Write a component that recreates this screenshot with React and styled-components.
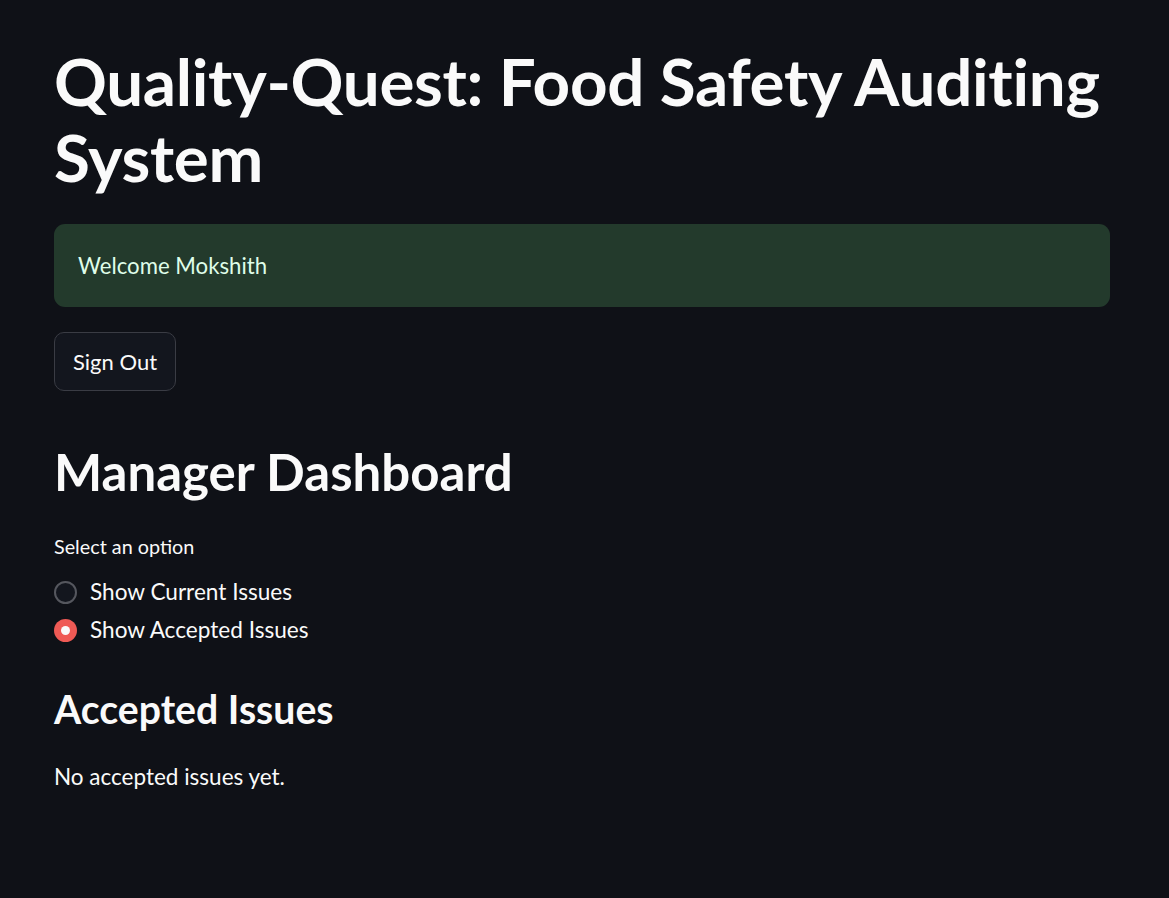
import React from "react";
import styled, { createGlobalStyle } from "styled-components";

const Global = createGlobalStyle`
  html, body { margin: 0; padding: 0; background: #0f1117; }
  body { font-family: "Source Sans Pro", Lato, "Noto Sans", sans-serif; color: #fafafa; }
  #root { min-height: 898px; }
`;

const Page = styled.main`
  background: #0f1117;
  min-height: 898px;
  padding: 43px 59px 40px 54px;
  box-sizing: border-box;
`;

const Title = styled.h1`
  margin: 0 0 29px;
  font-size: 65.5px;
  font-weight: 700;
  line-height: 76px;
  letter-spacing: -0.3px;
  color: #fafafa;
`;

const Alert = styled.div`
  background: #233a2c;
  border-radius: 11px;
  height: 83px;
  padding: 0 24px;
  display: flex;
  align-items: center;
  box-sizing: border-box;
  color: #dffde9;
  font-size: 22.2px;
`;

const Button = styled.button`
  margin-top: 25px;
  height: 59px;
  padding: 0 18px;
  background: #13161e;
  border: 1px solid #3a3c44;
  border-radius: 10px;
  color: #fafafa;
  font-family: inherit;
  font-size: 22px;
  cursor: pointer;
`;

const SubTitle = styled.h2`
  margin: 51px 0 0;
  font-size: 51px;
  font-weight: 700;
  line-height: 60px;
  color: #fafafa;
`;

const Label = styled.div`
  margin-top: 30px;
  font-size: 19.8px;
  line-height: 28px;
  color: #fafafa;
`;

const RadioList = styled.div`
  display: flex;
  flex-direction: column;
  gap: 10px;
  margin-top: 18px;
`;

const RadioRow = styled.label`
  display: flex;
  align-items: center;
  gap: 13px;
  font-size: 22.6px;
  line-height: 28px;
  color: #fafafa;
`;

const Dot = styled.span`
  width: 23px;
  height: 23px;
  border-radius: 50%;
  box-sizing: border-box;
  flex: none;
  display: flex;
  align-items: center;
  justify-content: center;
  background: ${(p) => (p.$checked ? "#ef5a55" : "#13161e")};
  border: ${(p) => (p.$checked ? "none" : "2px solid #55575e")};
  &::after {
    content: "";
    display: ${(p) => (p.$checked ? "block" : "none")};
    width: 9px;
    height: 9px;
    border-radius: 50%;
    background: #fafafa;
  }
`;

const Section = styled.h3`
  margin: 40px 0 0;
  font-size: 39.2px;
  font-weight: 700;
  line-height: 50px;
  color: #fafafa;
`;

const Text = styled.p`
  margin: 28px 0 0;
  font-size: 22.5px;
  line-height: 30px;
  color: #fafafa;
`;

export default function App() {
  return (
    <>
      <Global />
      <Page>
        <Title>Quality-Quest: Food Safety Auditing System</Title>
        <Alert>Welcome Mokshith</Alert>
        <Button>Sign Out</Button>
        <SubTitle>Manager Dashboard</SubTitle>
        <Label>Select an option</Label>
        <RadioList>
          <RadioRow>
            <Dot />
            Show Current Issues
          </RadioRow>
          <RadioRow>
            <Dot $checked />
            Show Accepted Issues
          </RadioRow>
        </RadioList>
        <Section>Accepted Issues</Section>
        <Text>No accepted issues yet.</Text>
      </Page>
    </>
  );
}
